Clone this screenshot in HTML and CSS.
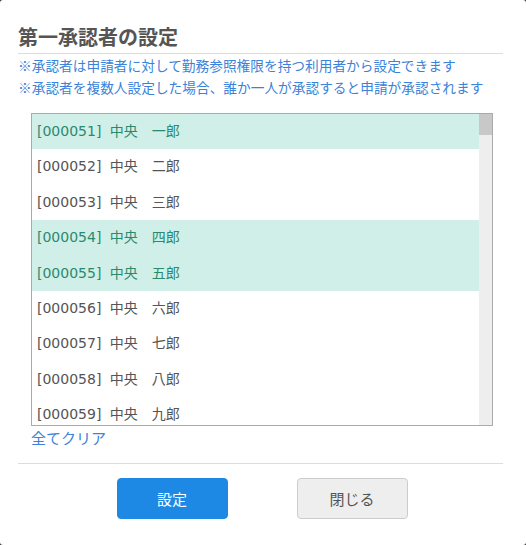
FILE: index.html
```html
<!DOCTYPE html>
<html lang="ja">
<head>
<meta charset="utf-8">
<title>第一承認者の設定</title>
<link rel="stylesheet" href="styles.css">
</head>
<body>
<div class="dialog">
  <h1 class="title">第一承認者の設定</h1>
  <div class="notes">
    <p>※承認者は申請者に対して勤務参照権限を持つ利用者から設定できます</p>
    <p>※承認者を複数人設定した場合、誰か一人が承認すると申請が承認されます</p>
  </div>
  <div class="listbox">
    <ul class="rows">
      <li class="row selected">[000051] 中央　一郎</li>
      <li class="row">[000052] 中央　二郎</li>
      <li class="row">[000053] 中央　三郎</li>
      <li class="row selected">[000054] 中央　四郎</li>
      <li class="row selected">[000055] 中央　五郎</li>
      <li class="row">[000056] 中央　六郎</li>
      <li class="row">[000057] 中央　七郎</li>
      <li class="row">[000058] 中央　八郎</li>
      <li class="row">[000059] 中央　九郎</li>
      <li class="row">[000060] 中央　十郎</li>
    </ul>
    <div class="scrollbar"><div class="thumb"></div></div>
  </div>
  <div class="clear-line"><a class="clear-link" href="#">全てクリア</a></div>
  <div class="footer">
    <button class="btn btn-primary" type="button">設定</button>
    <button class="btn btn-secondary" type="button">閉じる</button>
  </div>
</div>
</body>
</html>
```

FILE: styles.css
```css
* {
  box-sizing: border-box;
}

html, body {
  margin: 0;
  padding: 0;
  background: #3a3a3a;
}

body {
  font-family: "Open Sans", "Noto Sans CJK JP", sans-serif;
  color: #555;
}

.dialog {
  width: 526px;
  height: 545px;
  background: #fff;
  border-radius: 3px;
  padding: 0 23px 0 18px;
  display: flex;
  flex-direction: column;
  overflow: hidden;
}

.dialog > * {
  flex-shrink: 0;
}

.title {
  margin: 0;
  padding-top: 24px;
  padding-bottom: 1px;
  font-size: 20px;
  line-height: 28px;
  font-weight: bold;
  color: #555;
  border-bottom: 1px solid #ddd;
}

.notes {
  margin-top: 1px;
  color: #3b82d9;
  font-size: 13.7px;
  line-height: 22px;
}

.notes p {
  margin: 0;
  white-space: nowrap;
}

.listbox {
  margin: 14px 10px 0 13px;
  height: 313px;
  border: 1px solid #aaa;
  display: flex;
  overflow: hidden;
}

.rows {
  list-style: none;
  margin: 0;
  padding: 0;
  flex: 1;
  overflow: hidden;
}

.row {
  height: 35.4px;
  line-height: 35.4px;
  padding-left: 5px;
  font-family: "DejaVu Sans", "Noto Sans CJK JP", sans-serif;
  font-size: 14px;
  word-spacing: 4px;
  color: #555;
  white-space: nowrap;
}

.row.selected {
  background: #d0efe8;
  color: #2b8a6e;
}

.scrollbar {
  width: 13px;
  background: #eee;
  flex: none;
}

.thumb {
  height: 21px;
  background: #c8c8c8;
}

.clear-line {
  margin-left: 13px;
  height: 24px;
  line-height: 24px;
  font-size: 15px;
}

.clear-link {
  display: inline-block;
  color: #3b82d9;
  text-decoration: none;
}

.footer {
  margin-top: 13px;
  border-top: 1px solid #ddd;
  padding: 14px 0 0 3px;
  display: flex;
  justify-content: center;
  gap: 69px;
}

.btn {
  width: 111px;
  height: 41px;
  border-radius: 4px;
  font-family: "Open Sans", "Noto Sans CJK JP", sans-serif;
  font-size: 15px;
  cursor: pointer;
}

.btn-primary {
  background: #1e88e5;
  border: 1px solid #1e88e5;
  color: #fff;
}

.btn-secondary {
  background: #eee;
  border: 1px solid #ccc;
  color: #555;
}
```
